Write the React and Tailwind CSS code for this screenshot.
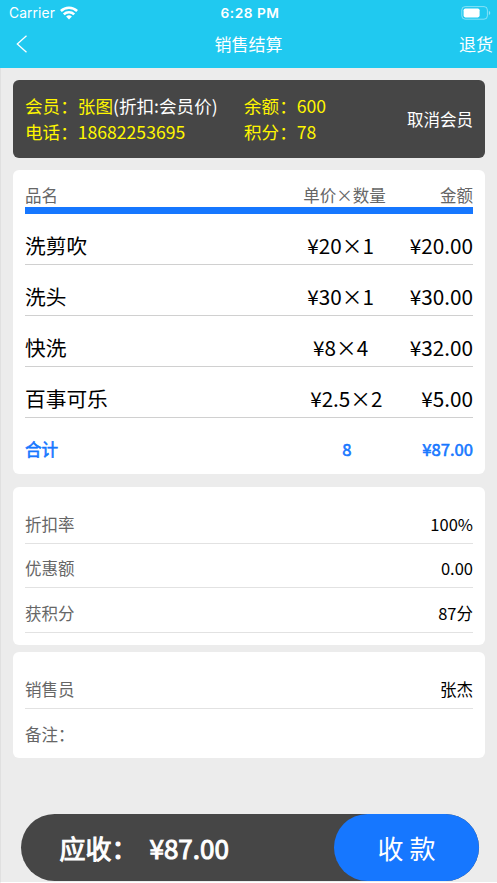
import React from 'react';

const items = [
  { id: 1, name: '洗剪吹', detail: '¥20×1', amount: '¥20.00' },
  { id: 2, name: '洗头', detail: '¥30×1', amount: '¥30.00' },
  { id: 3, name: '快洗', detail: '¥8×4', amount: '¥32.00' },
  { id: 4, name: '百事可乐', detail: '¥2.5×2', amount: '¥5.00' },
];

const summary = [
  { label: '折扣率', value: '100%' },
  { label: '优惠额', value: '0.00' },
  { label: '获积分', value: '87分' },
];

function WifiIcon() {
  return (
    <svg width="18" height="14" viewBox="0 0 18 14" fill="none" stroke="white" strokeWidth="2.5">
      <path d="M0.9 5a11.6 11.6 0 0 1 16.2 0" />
      <path d="M3.8 8.3a7.4 7.4 0 0 1 10.4 0" />
      <path d="M9 13.4 6.1 10.6a4.1 4.1 0 0 1 5.8 0Z" fill="white" stroke="none" />
    </svg>
  );
}

function BatteryIcon() {
  return (
    <svg width="30" height="14" viewBox="0 0 30 14" fill="none">
      <rect x="0.8" y="0.6" width="25.6" height="12.6" rx="3.4" stroke="white" strokeOpacity="0.45" />
      <rect x="2.6" y="2.4" width="16" height="9" rx="1.8" fill="white" />
      <path d="M27.9 4.7c1.8.7 1.8 3.7 0 4.4Z" fill="white" fillOpacity="0.5" />
    </svg>
  );
}

function Header() {
  return (
    <header className="h-[68px] bg-[#20c9f0] text-white">
      <div className="h-[25px] grid grid-cols-3 items-center pl-[9px] pr-[6px] font-['Inter',sans-serif] text-[13.8px]">
        <div className="flex items-center gap-[5px]">
          <span className="pt-px tracking-[0.1px]">Carrier</span>
          <WifiIcon />
        </div>
        <span className="pt-px text-center text-[13.7px] font-semibold tracking-[0.5px]">6:28 PM</span>
        <div className="flex justify-end">
          <BatteryIcon />
        </div>
      </div>
      <div className="h-[38px] grid grid-cols-3 items-center text-[17px]">
        <button className="pl-4">
          <svg width="12" height="18" viewBox="0 0 12 18" fill="none" stroke="white" strokeWidth="1.3">
            <path d="M10.5 0.8 1.3 9l9.2 8.2" />
          </svg>
        </button>
        <h1 className="text-center">销售结算</h1>
        <button className="pr-[4px] text-right">退货</button>
      </div>
    </header>
  );
}

function MemberCard() {
  return (
    <section className="h-[78px] flex items-center bg-[#464646] rounded-[6px] px-3 text-[17.6px] leading-[26px] text-[#fff600]">
      <div className="w-[219px]">
        <p>会员：张图<span className="text-white">(折扣:会员价)</span></p>
        <p>电话：18682253695</p>
      </div>
      <div className="flex-1">
        <p>余额：600</p>
        <p>积分：78</p>
      </div>
      <button className="text-[16.5px] text-white">取消会员</button>
    </section>
  );
}

function ItemsCard() {
  return (
    <section className="h-[304px] mt-3 bg-white rounded-[6px] px-3 pt-[14px]">
      <div className="h-[30px] flex border-b-[7px] border-[#1677ff] text-[16.5px] leading-[23px] text-[#666]">
        <span className="w-1/2">品名</span>
        <span className="flex-1 text-center">单价×数量</span>
        <span>金额</span>
      </div>
      {items.map((item) => (
        <div key={item.id} className="h-[51px] flex border-b border-[#d0d0d0] pt-[16px] text-[20.7px] leading-[30px] text-black">
          <span className="w-[55%]">{item.name}</span>
          <span className="flex-1 text-center">{item.detail}</span>
          <span>{item.amount}</span>
        </div>
      ))}
      <div className="flex pt-[19px] text-[16.6px] leading-[24px] text-[#1677ff] [-webkit-text-stroke:0.6px_#1677ff]">
        <span className="w-[55%]">合计</span>
        <span className="flex-1 text-center">8</span>
        <span>¥87.00</span>
      </div>
    </section>
  );
}

function InfoRow({ label, value }) {
  return (
    <div className="h-[44.7px] flex justify-between border-b border-[#e2e2e2] pt-[12.6px] text-[16.5px] leading-[24px]">
      <span className="text-[#666]">{label}</span>
      <span className="text-black">{value}</span>
    </div>
  );
}

export default function App() {
  return (
    <div className="h-[883px] flex flex-col overflow-hidden bg-[#ececec] font-['Noto_Sans_CJK_SC',sans-serif]">
      <Header />
      <main className="flex-1 pt-3 pl-[12px] pr-3 border-l border-[#e0e0e0]">
        <MemberCard />
        <ItemsCard />
        <section className="h-[158px] mt-[13px] bg-white rounded-[6px] px-3 pt-3">
          {summary.map((row) => (
            <InfoRow key={row.label} label={row.label} value={row.value} />
          ))}
        </section>
        <section className="h-[106px] mt-[7px] bg-white rounded-[6px] px-3 pt-3">
          <InfoRow label="销售员" value="张杰" />
          <p className="pt-[13px] text-[16.5px] leading-[24px] text-[#666]">备注：</p>
        </section>
      </main>

      {/* Pay bar */}
      <footer className="pl-[20px] pr-[18px] border-l border-l-[#e0e0e0] border-b-[1px] border-b-white pb-px">
        <div className="h-[67px] flex items-center bg-[#464646] rounded-full text-[26px] text-white">
          <div className="flex-1 flex pl-[38.5px] [-webkit-text-stroke:1px_white]">
            <span className="w-[90px]">应收：</span>
            <span>¥87.00</span>
          </div>
          <button className="w-[145px] h-full bg-[#1677ff] rounded-full">收 款</button>
        </div>
      </footer>
    </div>
  );
}
